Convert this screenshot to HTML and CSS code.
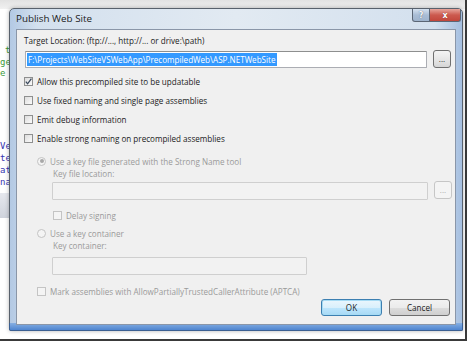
FILE: index.html
```html
<!DOCTYPE html>
<html lang="en">
<head>
<meta charset="UTF-8">
<title>Publish Web Site</title>
<link rel="stylesheet" href="styles.css">
</head>
<body>
<div class="shot">
<!-- IDE behind the dialog -->
<div class="ide">
<div class="ide-top"></div>
<span class="code green c1">t</span>
<span class="code green c2">ge</span>
<span class="code green c3">e</span>
<span class="code blue c4">Ve</span>
<span class="code blue c5">te</span>
<span class="code blue c6">at</span>
<span class="code blue c7">na</span>
<div class="ide-bar"></div>
</div>

<div class="window">
<div class="titlebar">
<span class="title">Publish Web Site</span>
<div class="caps">
<span class="cap help">?</span>
<span class="cap close">x</span>
</div>
</div>
<div class="client">
<div class="label l-target">Target Location: (ftp://..., http://... or drive:\path)</div>
<div class="pathrow r-target">
<div class="textbox"><span class="sel">F:\Projects\WebSiteVSWebApp\PrecompiledWeb\ASP.NETWebSite</span></div>
<button class="browse">...</button>
</div>

<div class="check r1"><span class="box"><svg width="9" height="9" viewBox="0 0 9 9"><path d="M1.8 4.6 L3.6 6.8 L7.4 1.6" fill="none" stroke="#3b4a5e" stroke-width="1.3"/></svg></span>Allow this precompiled site to be updatable</div>
<div class="check r2"><span class="box"></span>Use fixed naming and single page assemblies</div>
<div class="check r2"><span class="box"></span>Emit debug information</div>
<div class="check r2"><span class="box"></span>Enable strong naming on precompiled assemblies</div>

<div class="strong">
<div class="radio r-rad1"><span class="dot on"></span>Use a key file generated with the Strong Name tool</div>
<div class="sub">
<div class="label r-keylbl">Key file location:</div>
<div class="pathrow r-keybox">
<div class="textbox dis"></div>
<button class="browse dis">...</button>
</div>
<div class="check dis r-delay"><span class="box"></span>Delay signing</div>
</div>
<div class="radio r-rad2"><span class="dot"></span>Use a key container</div>
<div class="sub">
<div class="label r-keylbl">Key container:</div>
<div class="textbox dis short r-contbox"></div>
</div>
<div class="check dis r-mark"><span class="box"></span>Mark assemblies with AllowPartiallyTrustedCallerAttribute (APTCA)</div>
</div>

<div class="buttons">
<button class="btn ok">OK</button>
<button class="btn">Cancel</button>
</div>
</div>
</div>
</div>
</body>
</html>
```
FILE: styles.css
```css
*{margin:0;padding:0;box-sizing:border-box;}
html,body{width:470px;height:346px;background:#fff;overflow:hidden;}
body{font-family:'Open Sans','Noto Sans',Arial,sans-serif;font-size:8.1px;color:#222;}

/* screenshot with its drop shadow */
.shot{position:relative;width:467px;height:341px;background:#fff;border-right:2px solid #3a3a3a;border-bottom:2px solid #3a3a3a;padding:8px 0 0 9px;}

/* IDE fragments behind the dialog */
.ide{position:absolute;inset:0;pointer-events:none;}
.ide-top{position:absolute;left:0;top:0;width:100%;height:9px;background:linear-gradient(#e2e2e2,#f1f1f1);}
.code{position:absolute;font-family:'DejaVu Sans Mono',monospace;font-size:9px;line-height:10px;}
.green{color:#3c9a3c;}
.blue{color:#3535b0;}
.c1{left:5px;top:45px;}
.c2{left:0;top:57px;}
.c3{left:0;top:68px;}
.c4{left:0;top:141px;}
.c5{left:0;top:153px;}
.c6{left:0;top:165px;}
.c7{left:0;top:177px;}
.ide-bar{position:absolute;left:0;top:193px;width:9px;height:25px;background:linear-gradient(#e6e8ee,#cfd3dc);}

/* window frame */
.window{position:relative;width:454px;height:323px;border:1px solid #58616c;border-radius:5px 5px 2px 2px;background:linear-gradient(90deg,#b3c9e4,#d3e0ee 6%,#e2eaf2 50%,#d3e0ee 94%,#a5bfe0);padding:0 6px 6px 6px;box-shadow:0 0 4px rgba(0,0,0,0.3);}
.window::after{content:'';position:absolute;left:-1px;right:-1px;bottom:-1px;height:7px;border-radius:0 0 2px 2px;background:linear-gradient(#86afe2,#4f85d0);border:1px solid #3b5f92;border-top:none;}
.titlebar{height:20px;display:flex;align-items:flex-start;justify-content:space-between;}
.title{padding:4px 0 0 0;font-size:9.8px;line-height:12px;color:#1a1a1a;}
.caps{display:flex;margin-right:-5px;}
.cap{height:13px;display:flex;align-items:center;justify-content:center;color:#fff;font-weight:bold;font-family:'DejaVu Sans',sans-serif;font-size:8px;border:1px solid #5b6675;border-top:none;}
.help{width:18px;border-radius:0 0 0 3px;background:linear-gradient(#d6e2f0,#a9bdd5 50%,#9fb4cd);color:#f6f8fb;text-shadow:0 0 1px #3d4b5e;}
.close{width:31px;border-left:none;border-radius:0 0 3px 0;background:linear-gradient(#e7a59c,#cc5a4f 50%,#c2463b);text-shadow:0 0 1px #6b1f18;}

/* client area */
.client{position:relative;z-index:1;height:296px;background:#f0f0f0;border:1px solid #8a96a8;padding:5px 0 0 7px;}
.label{height:12px;line-height:12px;white-space:nowrap;}
.pathrow{display:flex;align-items:flex-start;gap:6px;}
.r-target{margin-top:4px;padding-left:1px;}
.textbox{width:402px;height:17px;background:#fff;border:1px solid #abadb3;border-top-color:#8e8f8f;border-radius:1px;padding:1px 0 0 1px;}
.sel{display:inline-block;background:#3399ff;color:#fff;line-height:13px;padding:0 1px;white-space:nowrap;}
.browse{width:18px;height:18px;margin-top:-1px;border:1px solid #707070;border-radius:3px;background:linear-gradient(#f4f4f4,#e7e7e7 50%,#d6d6d6);font-family:inherit;font-size:8px;line-height:10px;color:#222;}

.check,.radio{height:12px;display:flex;align-items:center;white-space:nowrap;}
.box{width:9px;height:9px;border:1px solid #8e8f8f;background:linear-gradient(135deg,#dcdcdc,#fbfbfb);margin-right:4px;flex:none;display:flex;}
.box svg{display:block;margin:-1px;}
.r1{margin-top:7px;}
.r2{margin-top:7px;}

.strong{padding-left:13px;color:#9a9a9a;}
.radio .dot{width:9px;height:9px;border-radius:50%;border:1px solid #c3c3c3;background:#f4f4f4;margin-right:4px;flex:none;display:flex;align-items:center;justify-content:center;}
.radio .dot.on::after{content:'';width:4px;height:4px;border-radius:50%;background:#a8a8a8;}
.r-rad1{margin-top:11px;}
.sub{padding-left:16px;}
.r-keylbl{margin-top:1px;}
.r-keybox{margin-top:2px;margin-left:-1px;}
.textbox.dis{width:376px;height:18px;background:#f2f2f2;border:1px solid #cfcfcf;}
.textbox.short{width:255px;}
.browse.dis{margin-top:-1px;border-color:#c6c6c6;background:#f4f4f4;color:#aaa;}
.check.dis .box{border-color:#c4c4c4;background:#f4f4f4;}
.r-delay{margin-top:9px;}
.r-rad2{margin-top:6px;}
.r-contbox{margin-top:5px;margin-left:-1px;}
.r-mark{margin-top:10px;}

.buttons{display:flex;justify-content:flex-end;gap:7px;margin-top:2px;padding-right:5px;}
.btn{width:61px;height:17px;border:1px solid #707070;border-radius:3px;background:linear-gradient(#f2f2f2,#ebebeb 50%,#dddddd 50%,#cfcfcf);font-family:inherit;font-size:8.1px;color:#1a1a1a;}
.btn.ok{border-color:#3c7fb1;background:linear-gradient(#eaf6fd,#d9f0fc 50%,#bee6fd 50%,#a7d9f5);box-shadow:0 0 0 1px #a6dbf4 inset;}
```
